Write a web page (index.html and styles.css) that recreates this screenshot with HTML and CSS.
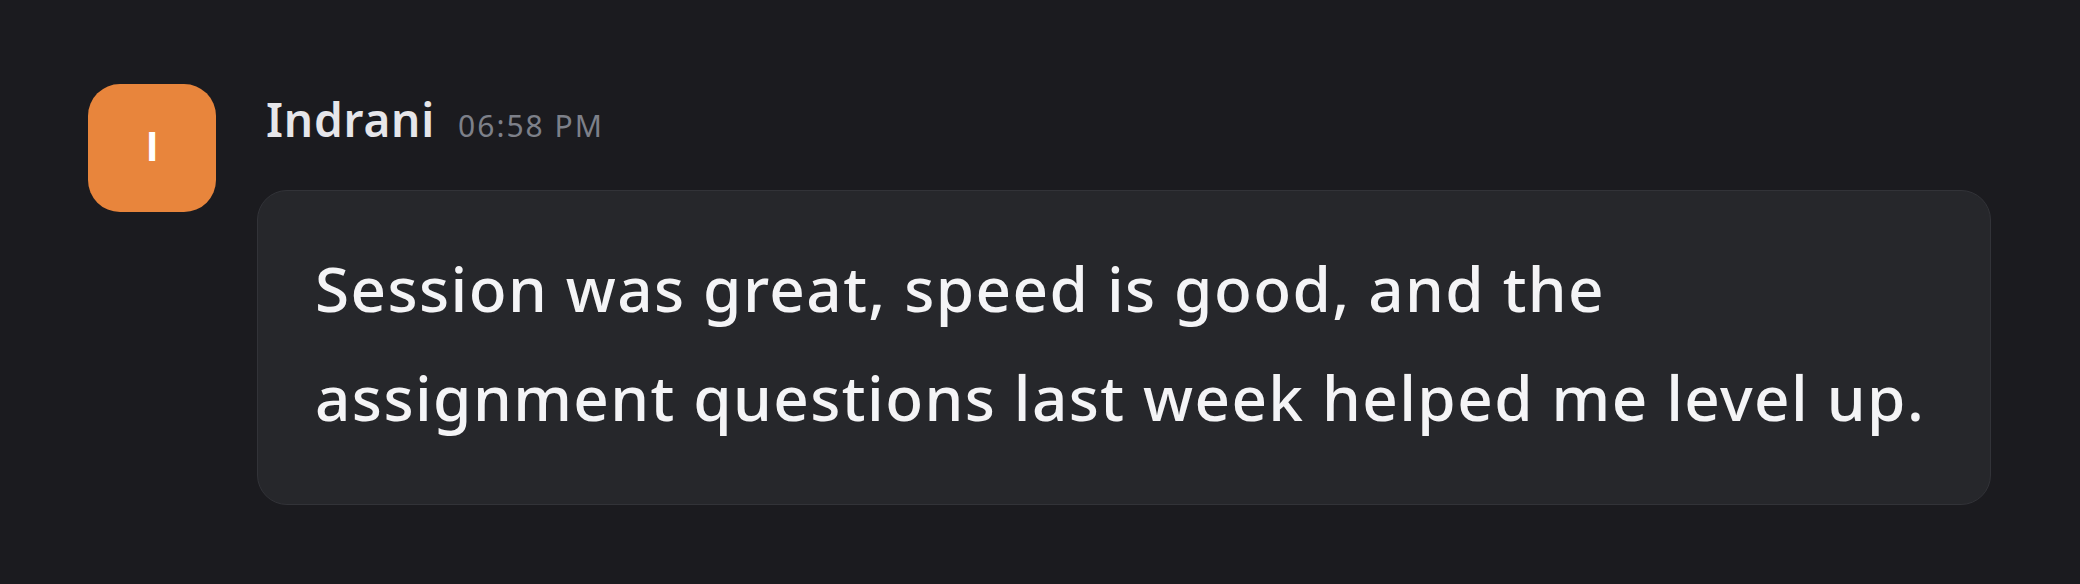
FILE: index.html
```html
<!DOCTYPE html>
<html lang="en">
<head>
<meta charset="utf-8">
<title>Message</title>
<link rel="stylesheet" href="styles.css">
</head>
<body>
  <div class="message">
    <div class="avatar">I</div>
    <div class="content">
      <div class="header">
        <span class="author">Indrani</span>
        <span class="time">06:58 PM</span>
      </div>
      <div class="bubble">
        <p class="text">Session was great, speed is good, and the assignment questions last week helped me level up.</p>
      </div>
    </div>
  </div>
</body>
</html>
```

FILE: styles.css
```css
html, body {
  margin: 0;
  padding: 0;
  background: #1b1b1f;
}

body {
  font-family: "Noto Sans", "Open Sans", sans-serif;
  color: #f4f4f5;
}

.message {
  display: flex;
  align-items: flex-start;
  gap: 41px;
  padding: 84px 89px 0 88px;
}

.avatar {
  flex: 0 0 128px;
  width: 128px;
  height: 128px;
  border-radius: 32px;
  background: #e8853c;
  color: #ffffff;
  display: flex;
  align-items: center;
  justify-content: center;
  font-family: Inter, "Liberation Sans", sans-serif;
  font-size: 40px;
  font-weight: 700;
  line-height: 1;
  padding-bottom: 2px;
  box-sizing: border-box;
}

.content {
  flex: 1;
  min-width: 0;
  display: flex;
  flex-direction: column;
}

.header {
  display: flex;
  align-items: baseline;
  gap: 23px;
  padding: 8px 0 0 9px;
  line-height: 54px;
}

.author {
  font-size: 46px;
  font-weight: 600;
  color: #e6e6ea;
  letter-spacing: 0.8px;
}

.time {
  font-size: 30px;
  color: #7d8089;
  letter-spacing: 2px;
}

.bubble {
  margin-top: 37px;
  background: #26272b;
  border: 1px solid #323338;
  border-radius: 30px;
  padding: 43px 56px 52px 57px;
}

.text {
  margin: 0;
  font-size: 62px;
  font-weight: 500;
  line-height: 109px;
  color: #f4f4f6;
  letter-spacing: 1.4px;
}
```
